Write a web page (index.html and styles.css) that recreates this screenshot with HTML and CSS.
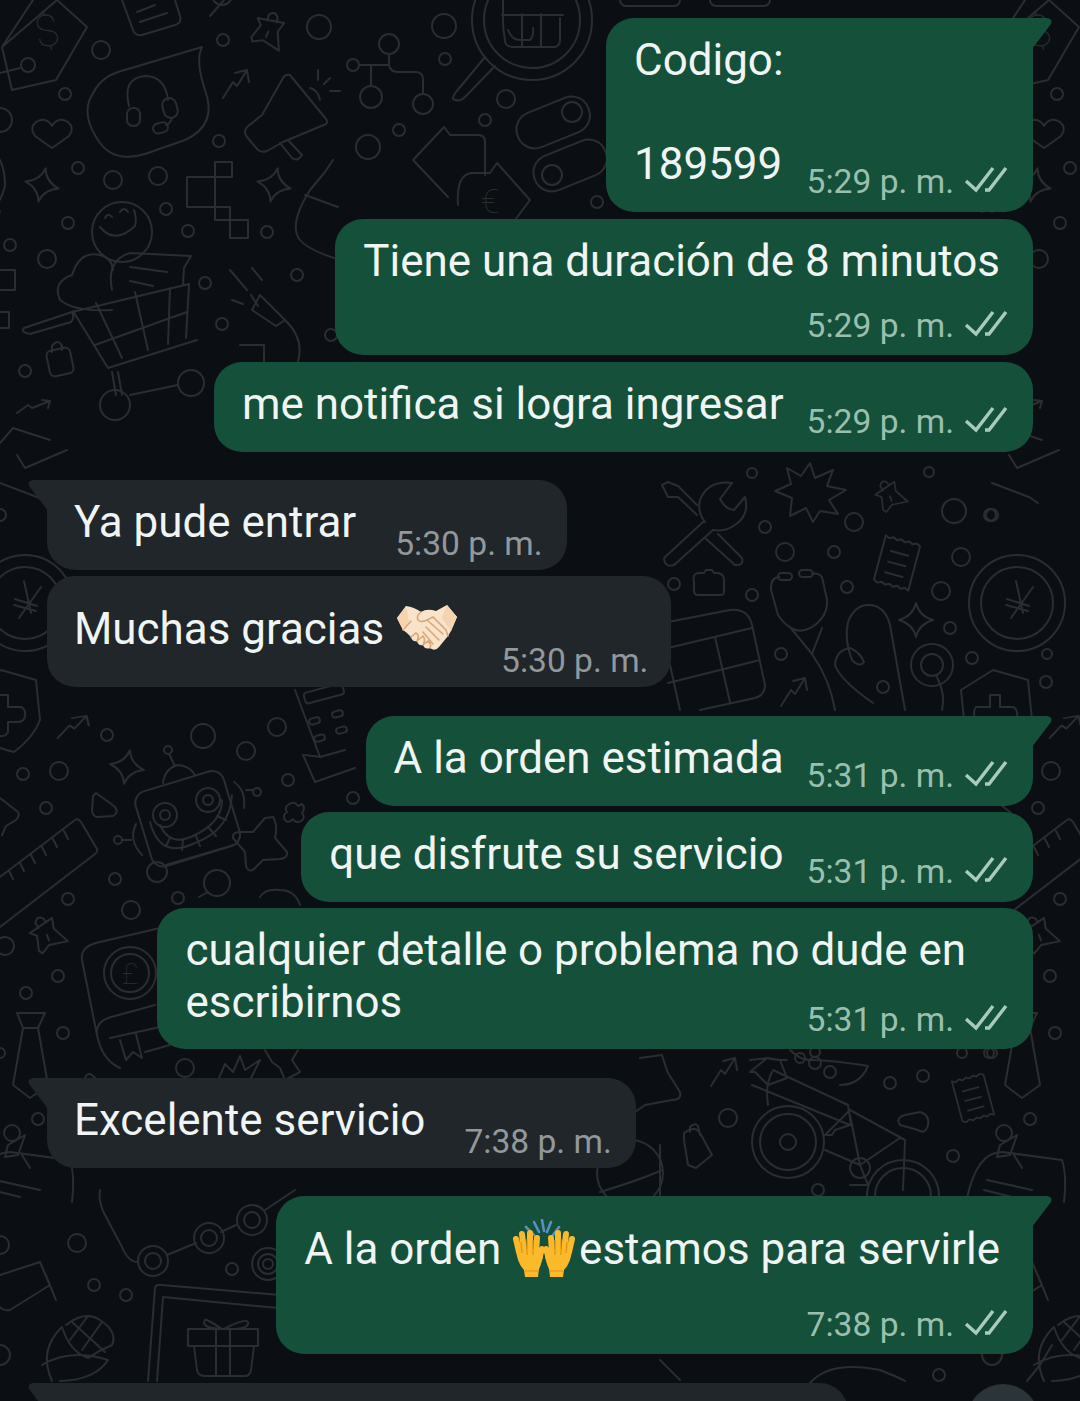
FILE: index.html
```html
<!DOCTYPE html>
<html lang="es">
<head>
    <meta charset="UTF-8">
    <meta name="viewport" content="width=device-width, initial-scale=1.0">
    <title>Chat</title>
    <link rel="stylesheet" href="styles.css">
</head>
<body>
    <div class="screen">
        <!-- Wallpaper doodles -->
        <svg class="wallpaper" width="1080" height="1401" viewBox="0 0 1080 1401" aria-hidden="true">
            <defs>
                <path id="sparkle" d="M0 -17 Q3 -4 17 0 Q3 4 0 17 Q-3 4 -17 0 Q-3 -4 0 -17 Z"/>
                <path id="bolt" d="M-12 14 L-2 -2 L2 2 L12 -14 M12 -14 L0 -11 M12 -14 L14 -2"/>
                <g id="pin">
                    <path d="M-14 8 L-8 -6 L-13 -12 L14 -14 L10 -4 L16 14 L-2 8 L-12 12 Z"/>
                    <path d="M-3 -12 L-3 -18 Q2 -24 6 -18 L7 -13 M1 -2 L0 4"/>
                </g>
                <g id="receipt">
                    <path d="M-18 -24 L-14 -22 L-10 -24 L-6 -22 L-2 -24 L2 -22 L6 -24 L10 -22 L14 -24 L18 -22 V24 L14 22 L10 24 L6 22 L2 24 L-2 22 L-6 24 L-10 22 L-14 24 L-18 22 Z"/>
                    <path d="M-9 -10 H9 M-9 1 H9 M-9 12 H9"/>
                </g>
                <!-- Doodles that wrap round the 992px tile -->
                <g id="edge">
                    <path d="M2 47 L33 0 M57 0 L87 27 L56 80 L12 90 L2 47 Z"/>
                    <text class="symbol" x="47" y="46" font-size="44" transform="rotate(-12 47 32)">$</text>
                    <circle cx="28" cy="65" r="7"/>
                    <path d="M0 73 L20 68"/>
                    <circle cx="0" cy="120" r="12"/>
                    <path d="M52 148 L35 136 Q29 128 36 122 Q46 116 52 126 Q58 116 68 122 Q75 128 69 136 Z"/>
                    <circle cx="65" cy="94" r="6"/><circle cx="10" cy="245" r="6"/><circle cx="47" cy="259" r="9"/><circle cx="78" cy="168" r="6"/><circle cx="68" cy="223" r="6"/>
                    <use href="#sparkle" transform="translate(42 185) rotate(12)"/>
                    <path d="M-32 160 Q-12 175 0 160 Q5 170 5 186 Q0 205 -10 212 M0 212 Q-2 205 -10 200"/>
                    <path d="M0 270 H15 V290 H0 M0 312 H9 V328 H0"/>
                    <path d="M0 443 L13 428 L50 440 M17 455 L25 468 L67 450 M17 413 L28 405 L32 408 L50 401 M50 401 L42 400 M50 401 L48 408"/>
                    <path d="M0 483 L37 497 L46 503 M0 515 m-6 0 a6 6 0 1 0 12 0 a6 6 0 1 0 -12 0"/>
                    <circle cx="25" cy="603" r="48"/><circle cx="25" cy="603" r="36"/>
                    <path d="M24 581 L31 613 M41 587 L19 618 M15 599 L37 606 M14 605 L36 611"/>
                    <path d="M-31 690 L1 670 L36 680 L40 720 Q34 737 14 752 Q-20 745 -28 720 Z"/>
                    <path d="M-2 695 H8 V707 H21 Q26 709 25 716 Q24 722 18 722 H8 V732 Q6 737 0 736 L-8 736 V722 L-16 722 Q-20 712 -16 707 H-2 Z"/>
                    <use href="#bolt" transform="translate(72 727) scale(1.2 .8)"/>
                    <circle cx="55" cy="654" r="5"/><circle cx="107" cy="735" r="6"/><circle cx="23" cy="774" r="6"/><circle cx="59" cy="771" r="9"/><circle cx="46" cy="808" r="6"/>
                    <path d="M0 798 L18 812 Q20 816 16 820 L6 826 L2 835"/>
                    <path d="M0 877 L75 820 Q78 818 81 822 L97 849 Q98 852 95 854 L0 927 M9 871 L13 879 M20 863 L24 871 M31 855 L35 863 M42 847 L46 855 M53 839 L57 847 M64 831 L68 839"/>
                    <circle cx="68" cy="899" r="6"/><circle cx="5" cy="946" r="9"/><circle cx="58" cy="976" r="6"/><circle cx="26" cy="993" r="6"/><circle cx="63" cy="1033" r="6"/>
                    <use href="#pin" transform="translate(47 937) rotate(-30)"/>
                    <path d="M17 1013 H45 L38 1028 H23 Z M23 1028 L13 1085 L30 1098 L48 1085 L38 1028"/>
                    <circle cx="0" cy="1053" r="5"/><circle cx="38" cy="1119" r="6"/>
                    <circle cx="12" cy="1133" r="8"/><path d="M8 1145 L25 1135 L18 1155 L5 1157 Z M22 1155 L30 1168"/>
                    <path d="M-25 1198 Q-15 1152 10 1152 L70 1160 Q75 1175 72 1202 M-5 1180 L40 1190 M-8 1190 L20 1197"/>
                    <path d="M0 1275 L40 1262 L50 1285 L10 1310 Q0 1312 -5 1300 M40 1262 L56 1300"/>
                    <circle cx="0" cy="1245" r="9"/><circle cx="0" cy="1355" r="10"/>
                    <path d="M52 1381 Q38 1350 62 1327 M42 1365 Q70 1348 108 1360 Q95 1380 60 1381 M66 1325 Q85 1310 100 1320 Q118 1332 112 1345 Q100 1350 88 1358 Q70 1352 62 1327 M72 1322 L105 1352 M88 1316 L70 1340 M102 1322 L82 1350"/>
                </g>
            </defs>

            <use href="#edge"/>
            <use href="#edge" x="992"/>

            <!-- top row -->
            <circle cx="101" cy="50" r="9"/><circle cx="223" cy="40" r="6"/><circle cx="319" cy="27" r="12"/><circle cx="219" cy="141" r="6"/><circle cx="113" cy="180" r="9"/><circle cx="158" cy="176" r="9"/><circle cx="166" cy="209" r="6"/><circle cx="188" cy="231" r="6"/><circle cx="267" cy="232" r="6"/><circle cx="205" cy="283" r="6"/><circle cx="297" cy="275" r="6"/><circle cx="222" cy="324" r="6"/><circle cx="331" cy="335" r="6"/><circle cx="25" cy="371" r="6"/><circle cx="191" cy="383" r="13"/>
            <path d="M122 0 L133 30 Q135 36 142 35 L175 25 Q182 23 180 16 L175 0 M137 12 L155 5 M140 22 L167 13"/>
            <path d="M202 47 Q195 60 205 90 Q218 125 185 140 L145 154 Q115 163 100 143 Q80 115 92 95 Q100 78 118 72 Z"/>
            <path d="M129 106 Q122 78 145 76 Q165 76 168 100"/>
            <rect x="127" y="108" width="13" height="18" rx="6"/><rect x="163" y="98" width="14" height="20" rx="7" transform="rotate(-15 170 108)"/><rect x="153" y="123" width="15" height="10" rx="5" transform="rotate(-15 160 128)"/><path d="M172 118 Q170 124 166 125"/>
            <use href="#bolt" transform="translate(235 84)"/>
            <path d="M224 0 L210 16 M220 -5 m-8 0 a10 10 0 0 0 20 0"/>
            <use href="#pin" transform="translate(267 33) rotate(15)"/>
            <path d="M290 75 Q285 74 283 78 L262 115 L247 127 Q243 132 247 137 L258 150 Q262 153 267 151 L283 142 L326 124 Q328 122 326 119 Z M280 143 L292 158 Q298 162 302 155 L288 140 M310 88 Q318 90 320 100 M318 70 V80 M330 78 L324 84 M330 91 H340"/>
            <path d="M187 177 H215 V162 H232 V177 H215 V207 H187 Z M215 207 H230 V220 H248 V238 H230 V220 H215 Z"/>
            <use href="#sparkle" transform="translate(274 185) rotate(12)"/>
            <path d="M333 160 L325 172 L310 190 Q288 225 300 240 Q308 250 340 260 M305 195 L338 207"/>
            <circle cx="122" cy="232" r="30"/>
            <path d="M100 227 Q115 245 135 226 Q137 218 134 210 M105 218 Q108 212 112 217 M120 212 Q124 206 128 212"/>
            <path d="M112 310 Q75 312 60 300 Q52 282 72 275 Q80 250 100 255 Q112 258 113 270"/>
            <path d="M112 290 Q106 260 130 253 L191 256 L184 268 L183 285 M130 267 L167 272 M130 281 L153 286"/>
            <path d="M24 328 L72 312 Q75 318 71 322 L30 334 Q20 332 24 328 Z M73 311 L108 368 L197 340 M72 312 L189 284 L186 338 M95 345 L187 312 M96 303 L122 358 M135 292 L148 350 M170 288 L168 344"/>
            <path d="M112 372 L116 395 M118 372 L122 395 M130 395 L178 385"/>
            <circle cx="115" cy="405" r="15"/>
            <path d="M230 270 L247 290 M252 268 L262 280 M232 300 L243 304 M251 295 L258 306 M260 295 L285 320 L276 326 L252 310 Z M285 320 Q306 340 297 365 M240 345 H264 V362"/>
            <rect x="48" y="349" width="24" height="26" rx="5" transform="rotate(-12 60 362)"/><path d="M52 352 V346 Q58 338 62 346 V350"/>

            <!-- magnifier, tree, pills -->
            <circle cx="444" cy="26" r="12"/><circle cx="389" cy="44" r="10"/><circle cx="445" cy="59" r="6"/><circle cx="353" cy="65" r="6"/><circle cx="371" cy="97" r="11"/><circle cx="423" cy="104" r="10"/><circle cx="506" cy="99" r="9"/><circle cx="485" cy="120" r="6"/><circle cx="399" cy="130" r="6"/><circle cx="368" cy="147" r="12"/><circle cx="597" cy="202" r="6"/>
            <path d="M359 65 H389 V54 M389 65 Q390 72 398 72 H416 Q423 72 423 80 V94 M371 65 V86"/>
            <circle cx="532" cy="20" r="60"/><circle cx="532" cy="20" r="48"/>
            <path d="M485 57 L456 92 Q450 100 456 100 Q460 102 466 96 L495 66"/>
            <path d="M503 0 V20 Q503 30 505 40 Q505 46 512 47 H555 Q560 46 560 40 V18 M502 15 H563 M522 14 V47 M541 14 V47 M508 30 Q512 40 520 40 H530 Q534 36 533 28"/>
            <rect x="515" y="104" width="76" height="37" rx="18" transform="rotate(-22 553 122)"/><circle cx="572" cy="112" r="10"/>
            <rect x="532" y="147" width="76" height="37" rx="18" transform="rotate(-22 570 165)"/><circle cx="552" cy="175" r="10"/>
            <path d="M448 197 L413 160 L444 127 L450 135 H478 Q485 135 485 142 V175"/>
            <path d="M458 205 Q456 174 472 173 H490 L497 163 L530 200 L515 220"/>
            <text class="symbol" x="490" y="213" font-size="34">€</text>
            <rect x="10" y="-8" width="60" height="12" rx="6" transform="translate(610 2)"/>
            <rect x="10" y="-8" width="60" height="12" rx="6" transform="translate(700 2)"/>

            <!-- row with wrench and stethoscope -->
            <circle cx="752" cy="473" r="5"/><circle cx="929" cy="472" r="5"/><circle cx="954" cy="511" r="12"/><circle cx="990" cy="515" r="6"/><circle cx="765" cy="527" r="6"/><circle cx="854" cy="522" r="9"/><circle cx="785" cy="552" r="9"/><circle cx="834" cy="552" r="6"/><circle cx="961" cy="557" r="9"/><circle cx="674" cy="584" r="6"/><circle cx="752" cy="595" r="6"/><circle cx="847" cy="587" r="6"/><circle cx="941" cy="591" r="9"/><circle cx="950" cy="628" r="6"/><circle cx="781" cy="654" r="6"/><circle cx="972" cy="658" r="6"/><circle cx="883" cy="687" r="6"/><circle cx="1046" cy="682" r="6"/>
            <path d="M705 522 Q697 512 700 500 Q708 480 732 483 L720 499 Q726 510 734 510 L745 497 Q750 515 735 525 Q725 532 713 530 L674 565 Q665 568 664 558 L703 522 Z"/>
            <path d="M697 515 L678 497 L668 497 L662 485 L668 482 L678 486 L697 505 M718 534 L742 558 Q744 566 735 565 L705 538"/>
            <path d="M810 463 L815 478 L833 470 L827 486 L846 490 L829 500 L838 514 L820 511 L813 522 L806 508 L790 516 L792 498 L775 491 L791 484 L787 468 L801 476 Z"/>
            <use href="#pin" transform="translate(890 498) rotate(-30) scale(.85)"/>
            <use href="#receipt" transform="translate(897 563) rotate(15)"/>
            <path d="M694 582 Q692 574 698 573 H704 L706 570 H712 L714 573 H718 Q724 574 724 580 L724 592 Q724 595 720 595 H698 Q694 595 694 590 Z"/>
            <rect x="778" y="573" width="14" height="7" rx="3.5"/><rect x="799" y="570" width="14" height="7" rx="3.5"/>
            <path d="M779 577 Q770 578 771 590 L778 615 Q795 640 815 625 Q828 615 827 600 L822 577 Q818 572 812 574 M790 627 L812 654 L822 628 M812 654 Q830 680 835 710"/>
            <path d="M873 703 Q840 680 835 665 Q836 650 850 648 Q860 652 864 662 Q860 668 852 660 Q844 640 848 622 Q855 604 870 605 Q885 606 890 625 L905 710"/>
            <circle cx="932" cy="665" r="21"/><circle cx="932" cy="665" r="11"/>
            <path d="M937 677 Q946 695 942 710"/>
            <use href="#sparkle" transform="translate(916 620)"/>
            <use href="#bolt" transform="translate(793 692)"/>
            <path d="M668 622 L730 610 Q748 608 752 625 L765 685 Q765 695 755 698 L700 710 M668 648 L752 628 M668 683 L760 660 M715 637 L730 702 M670 665 L680 710"/>

            <!-- robot row -->
            <circle cx="203" cy="736" r="12"/><circle cx="277" cy="727" r="9"/><circle cx="246" cy="751" r="9"/><circle cx="288" cy="780" r="6"/><circle cx="353" cy="798" r="6"/><circle cx="115" cy="879" r="6"/><circle cx="178" cy="898" r="6"/><circle cx="131" cy="910" r="9"/><circle cx="185" cy="1068" r="9"/>
            <path d="M96 793 L114 806 Q120 812 113 816 L97 817 Q92 816 92 810 L93 796 Z"/>
            <use href="#sparkle" transform="translate(127 767) rotate(10)"/>
            <rect x="142" y="780" width="92" height="78" rx="12" transform="rotate(-17 187 820)"/>
            <circle cx="165" cy="815" r="12"/><circle cx="165" cy="815" r="5"/><circle cx="208" cy="800" r="12"/><circle cx="208" cy="800" r="5"/>
            <path d="M150 822 Q160 860 195 843 Q230 830 232 795 M160 825 Q170 848 195 835 Q222 822 222 800 M170 838 L166 846 M183 840 L182 850 M196 836 L200 846 M209 828 L216 836 M217 816 L226 820"/>
            <circle cx="168" cy="750" r="4"/><path d="M169 754 L175 766 M163 783 Q165 768 178 765 Q190 766 195 775"/>
            <path d="M234 782 Q246 790 244 808 M246 790 L253 790"/><circle cx="257" cy="792" r="4"/>
            <path d="M136 824 Q128 840 142 855 M131 840 H122"/><circle cx="118" cy="840" r="4"/>
            <circle cx="157" cy="872" r="10"/>
            <path d="M166 865 L234 845"/>
            <path d="M265 818 L273 817 Q278 825 275 838 L287 852 Q288 858 280 859 L263 860 L253 870 Q248 872 246 866 L245 852 L233 838 Q232 832 240 832 L253 832 Z"/>
            <path d="M288 805 Q294 800 298 806 L302 804 Q306 808 302 813 Q306 818 301 821 Q296 824 293 819 Q288 824 285 820 Q282 815 287 812 Q284 808 288 805 Z"/>
            <path d="M295 690 L320 757 L345 750 M303 755 L315 782 L355 768 M320 757 L305 755"/>
            <rect x="304" y="688" width="40" height="11" rx="3" transform="rotate(-15 324 694)"/>
            <rect x="309" y="718" width="11" height="6" rx="3" transform="rotate(-15 314 721)"/><rect x="332" y="711" width="11" height="6" rx="3" transform="rotate(-15 337 714)"/><rect x="314" y="735" width="11" height="6" rx="3" transform="rotate(-15 320 738)"/><rect x="336" y="727" width="11" height="6" rx="3" transform="rotate(-15 342 730)"/>
            <circle cx="217" cy="883" r="13"/><path d="M208 892 L199 897"/>
            <path d="M260 897 Q265 888 280 890 Q295 890 300 905 M340 893 H360"/>
            <path d="M160 928 L100 942 Q80 946 82 960 L97 1035 Q102 1060 120 1068 M97 1035 Q95 1020 115 1016 L155 1005 M110 1038 L160 1027 M120 1040 L126 1060 L133 1052 L142 1058 L136 1034 M145 1052 L170 1045"/>
            <circle cx="130" cy="973" r="26"/><circle cx="130" cy="973" r="19"/>
            <text class="symbol" x="130" y="984" font-size="30">£</text>
            <path d="M219 1078 L225 1064 L233 1072 L240 1056 L245 1070 L260 1060 L250 1080"/>
            <path d="M265 1050 L272 1062 L280 1068 L285 1080 L300 1072 L292 1060 L298 1050"/>
            <path d="M85 1078 Q88 1070 95 1078"/>

            <!-- bike row -->
            <circle cx="962" cy="1053" r="5"/><circle cx="989" cy="1053" r="5"/><circle cx="890" cy="1083" r="6"/><circle cx="923" cy="1076" r="6"/><circle cx="728" cy="1118" r="9"/><circle cx="953" cy="1156" r="6"/><circle cx="818" cy="1190" r="6"/>
            <path d="M640 1058 L662 1055 Q665 1065 668 1073 L680 1092 Q682 1100 672 1100 L645 1105 L635 1112 Q625 1112 620 1100"/>
            <use href="#bolt" transform="translate(723 1072)"/>
            <path d="M684 1133 Q695 1125 700 1133 L712 1155 L696 1168 L688 1165 L684 1140 Z M690 1132 V1127 Q695 1122 698 1126 L700 1135"/>
            <circle cx="788" cy="1142" r="36"/><circle cx="788" cy="1142" r="28"/><circle cx="788" cy="1142" r="8"/>
            <circle cx="903" cy="1196" r="36"/><circle cx="903" cy="1196" r="28"/>
            <path d="M752 1085 L850 1125 L835 1130 L832 1135 L825 1135 M773 1070 L848 1105 L851 1125 M772 1072 Q765 1085 768 1105 M825 1135 L850 1110"/>
            <path d="M850 1110 L905 1140 L903 1190 M850 1115 L860 1165 L900 1138 M860 1165 L825 1150 M860 1165 L868 1185 L850 1185"/>
            <circle cx="860" cy="1168" r="10"/>
            <path d="M900 1125 Q895 1118 905 1115 L920 1112 Q930 1115 928 1125 Q925 1135 918 1130 L900 1125 Z"/>
            <path d="M750 1060 L768 1058 Q772 1060 787 1060 M755 1072 L768 1085 L787 1078 L780 1060 L767 1058 L750 1072 Z"/>
            <path d="M790 1050 Q800 1060 810 1060 Q830 1060 868 1066 Q860 1085 840 1085"/>
            <circle cx="800" cy="1058" r="5"/><circle cx="815" cy="1063" r="6"/><circle cx="830" cy="1072" r="6"/><circle cx="815" cy="1052" r="5"/>
            <use href="#receipt" transform="translate(973 1098) rotate(-15) scale(.9)"/>
            <path d="M660 1145 V1195 M600 1192 Q640 1180 662 1170"/>
            <circle cx="630" cy="1173" r="33"/>

            <!-- bottom row -->
            <circle cx="77" cy="1243" r="9"/><circle cx="232" cy="1269" r="6"/><circle cx="94" cy="1285" r="6"/><circle cx="126" cy="1295" r="6"/>
            <path d="M100 1190 Q98 1202 105 1215 L122 1247 Q128 1262 138 1262 M167 1255 L196 1243 M221 1232 L236 1225 M265 1210 L295 1190"/>
            <circle cx="153" cy="1261" r="15"/><circle cx="153" cy="1261" r="8"/><circle cx="209" cy="1238" r="15"/><circle cx="209" cy="1238" r="8"/><circle cx="252" cy="1220" r="15"/><circle cx="252" cy="1220" r="8"/><circle cx="268" cy="1264" r="16"/><circle cx="268" cy="1264" r="10"/><circle cx="268" cy="1264" r="5"/>
            <path d="M148 1381 L155 1288 Q156 1284 162 1285 L280 1295 M163 1297 L278 1308 M163 1297 L157 1381"/>
            <path d="M188 1329 H258 V1346 H188 Z M194 1346 L197 1370 Q198 1376 205 1376 H245 Q250 1376 251 1370 L254 1346 M216 1329 V1376 M230 1329 V1376 M222 1329 Q205 1318 205 1320 Q200 1328 222 1329 M224 1329 Q245 1318 248 1322 Q250 1330 224 1329"/>
            <path d="M660 1360 L680 1380"/>
            <path d="M810 1383 Q830 1360 880 1370 Q900 1378 905 1381"/>
            <circle cx="939" cy="1375" r="6"/>
            <path d="M1027 1381 L1040 1365 L1052 1345"/>
        </svg>

        <main class="chat">
            <div class="bubble out tail line">
                <p class="text">Codigo:<br><br>189599</p>
                <span class="meta">5:29 p. m. <svg class="ticks" viewBox="0 0 44 28"><path d="M2 16 L12 25 L29 3 M21 25 L25 25 L42 3"/></svg></span>
            </div>
            <div class="bubble out stack loose">
                <p class="text">Tiene una duración de 8 minutos</p>
                <span class="meta">5:29 p. m. <svg class="ticks" viewBox="0 0 44 28"><path d="M2 16 L12 25 L29 3 M21 25 L25 25 L42 3"/></svg></span>
            </div>
            <div class="bubble out line loose">
                <p class="text">me notifica si logra ingresar</p>
                <span class="meta">5:29 p. m. <svg class="ticks" viewBox="0 0 44 28"><path d="M2 16 L12 25 L29 3 M21 25 L25 25 L42 3"/></svg></span>
            </div>

            <div class="bubble in tail line group">
                <p class="text">Ya pude entrar</p>
                <span class="meta">5:30 p. m.</span>
            </div>
            <div class="bubble in line tall thanks">
                <p class="text">Muchas gracias
                    <svg class="emoji handshake" viewBox="0 0 60 50" aria-hidden="true">
                        <path d="M9 3 L0 15 L6 27 L10 30 L14 34 Q15 39 20 38 Q21 43 26 42 Q28 47 33 45 Q38 49 42 44 L51 33 L54 28 L60 14 L50 2 L39 8 Q30 5 24 9 Q17 4 9 3 Z" fill="#fae3cb"/>
                        <path d="M24 9 Q19 13 21 17 Q24 20 30 17 L36 14 L49 27 L51 33 M30 17 L46 31 M29 24 L42 37 M26 29 L36 41 M6 27 L14 18 M14 34 L19 30 Q23 32 20 38 M20 38 L26 33 Q29 36 26 42 M26 42 L31 38 Q35 41 33 45" fill="none" stroke="#d9a878" stroke-width="1.6" stroke-linecap="round"/>
                        <path d="M9 3 L0 15 L6 27 L12 18 Z M50 2 L60 14 L54 28 L45 15 Z" fill="#f6d4b0"/>
                    </svg>
                </p>
                <span class="meta">5:30 p. m.</span>
            </div>

            <div class="bubble out tail line group wide">
                <p class="text">A la orden estimada</p>
                <span class="meta">5:31 p. m. <svg class="ticks" viewBox="0 0 44 28"><path d="M2 16 L12 25 L29 3 M21 25 L25 25 L42 3"/></svg></span>
            </div>
            <div class="bubble out line">
                <p class="text">que disfrute su servicio</p>
                <span class="meta">5:31 p. m. <svg class="ticks" viewBox="0 0 44 28"><path d="M2 16 L12 25 L29 3 M21 25 L25 25 L42 3"/></svg></span>
            </div>
            <div class="bubble out stack wrapped">
                <p class="text">cualquier detalle o problema no dude en<br>escribirnos</p>
                <span class="meta">5:31 p. m. <svg class="ticks" viewBox="0 0 44 28"><path d="M2 16 L12 25 L29 3 M21 25 L25 25 L42 3"/></svg></span>
            </div>

            <div class="bubble in tail line group wide">
                <p class="text">Excelente servicio</p>
                <span class="meta">7:38 p. m.</span>
            </div>

            <div class="bubble out tail stack tall group">
                <p class="text">A la orden
                    <svg class="emoji hands" viewBox="0 0 64 58" aria-hidden="true">
                        <path d="M30 1 L32 12 M22 3 L27 13 M39 3 L35 13 M14 8 L22 16 M47 8 L41 16" stroke="#5b8ec4" stroke-width="2.6" stroke-linecap="round"/>
                        <g id="hand-l">
                            <path d="M4 30 H28 L31 38 Q29 46 27 50 L26 58 H13 L12 51 Q5 44 4 30 Z" fill="#fbb92c"/>
                            <path d="M7 33 L4 20 M12 32 L10 15 M18 32 L18 14 M24 33 L25 19 M27 40 L30 30" stroke="#fbb92c" stroke-width="6" stroke-linecap="round"/>
                            <path d="M9 23 L10 34 M15 20 L15 36 M21 21 L21 36 M13 52 H26" stroke="#e0930f" stroke-width="1.2" fill="none"/>
                        </g>
                        <use href="#hand-l" transform="translate(64 0) scale(-1 1)"/>
                    </svg><span class="after-emoji">estamos para servirle</span></p>
                <span class="meta">7:38 p. m. <svg class="ticks" viewBox="0 0 44 28"><path d="M2 16 L12 25 L29 3 M21 25 L25 25 L42 3"/></svg></span>
            </div>

            <div class="bubble in tail cut group wide"></div>
        </main>

        <div class="scroll-button"></div>
    </div>
</body>
</html>
```

FILE: styles.css
```css
* {
    box-sizing: border-box;
}
html, body {
    margin: 0;
    padding: 0;
}
.screen {
    position: relative;
    width: 1080px;
    height: 1401px;
    overflow: hidden;
    background-color: #0b0f13;
    font-family: Roboto, "Liberation Sans", sans-serif;
}
.wallpaper {
    position: absolute;
    top: 0;
    left: 0;
    fill: none;
    stroke: #2a2e31;
    stroke-width: 2;
    stroke-linecap: round;
    stroke-linejoin: round;
}
.symbol {
    fill: #2a2e31;
    stroke: none;
    text-anchor: middle;
    font-family: Roboto, sans-serif;
    font-weight: 100;
}
.chat {
    position: relative;
    display: flex;
    flex-direction: column;
    padding: 18px 47px 0;
}

/* Bubbles */
.bubble {
    position: relative;
    margin-top: 6px;
    padding: 16px 25px 22px 28px;
    border-radius: 28px;
    color: #f0f4f3;
}
.bubble:first-child {
    margin-top: 0;
}
.bubble.loose {
    margin-top: 7px;
}
.bubble.group {
    margin-top: 28px;
}
.bubble.wide {
    margin-top: 29px;
}
.out {
    align-self: flex-end;
    background-color: #15503a;
}
.in {
    align-self: flex-start;
    background-color: #20262a;
    padding-left: 27px;
}
.out.tail {
    border-top-right-radius: 0;
}
.in.tail {
    border-top-left-radius: 0;
}
.tail::after {
    content: "";
    position: absolute;
    top: 0;
    width: 20px;
    height: 31px;
    background-color: inherit;
}
.out.tail::after {
    right: -19px;
    clip-path: path("M0 0 H15 Q21 1 19 6 L0 31 Z");
}
.in.tail::after {
    left: -19px;
    clip-path: path("M20 0 H5 Q-1 1 1 6 L20 31 Z");
}

.text {
    margin: 0;
    font-size: 43.95px;
    line-height: 52px;
    white-space: nowrap;
}
.meta {
    display: flex;
    align-items: center;
    gap: 10px;
    height: 40px;
    font-size: 33.6px;
    line-height: 40px;
    white-space: nowrap;
}
.out .meta {
    color: #9bbfae;
}
.in .meta {
    color: #92989b;
}
.ticks {
    width: 44px;
    height: 28px;
    fill: none;
    stroke: #a9cbbb;
    stroke-width: 3.4;
    margin-top: -6px;
}

/* text and time on one row */
.line {
    display: flex;
    gap: 23px;
}
.line .meta {
    align-self: flex-end;
    margin-bottom: -12px;
}
.line.in {
    gap: 39px;
    padding-right: 24px;
}
.line.in .meta {
    margin-bottom: -16px;
}

/* time on a row of its own */
.stack .text {
    margin-right: 8px;
}
.stack .meta {
    justify-content: flex-end;
    margin-top: 19px;
    margin-bottom: -13px;
}
.stack.wrapped {
    padding-bottom: 21px;
}
.wrapped .text {
    margin-right: 42px;
}
.wrapped .meta {
    margin-top: -28px;
    margin-bottom: -12px;
}

/* rows made taller by an emoji */
.tall .text {
    padding: 11px 0;
}
.thanks .text {
    padding: 11px 0 10px;
}
.thanks.line {
    gap: 44px;
    padding-right: 23px;
}
.thanks.line .meta {
    margin-bottom: -16px;
}
/* margins cancel the emoji's height so it doesn't stretch the line */
.emoji {
    display: inline-block;
}
.handshake {
    width: 60px;
    height: 50px;
    margin: -41px 0 -9px 2px;
}
.hands {
    width: 64px;
    height: 58px;
    margin: -45px 0 -13px;
}
.after-emoji {
    margin-left: 3px;
}

.cut {
    width: 801px;
    height: 60px;
    padding: 0;
}
.scroll-button {
    position: absolute;
    top: 1384px;
    left: 967px;
    width: 72px;
    height: 72px;
    border-radius: 50%;
    background-color: #2b3439;
}
```
